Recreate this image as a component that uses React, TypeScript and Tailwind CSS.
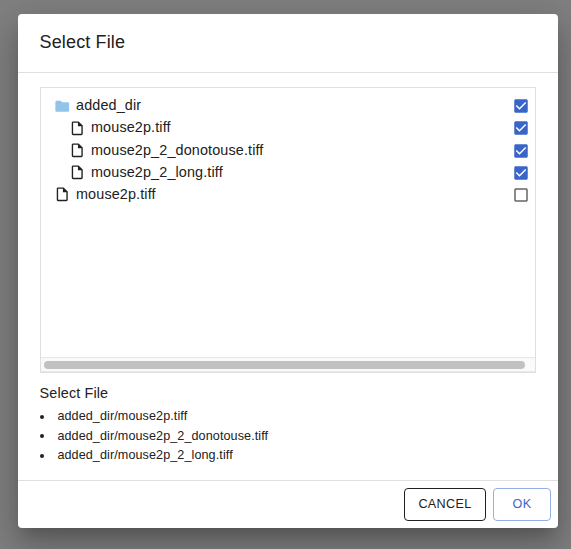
import React from 'react';

type Entry = { name: string; kind: 'dir' | 'file'; nested?: boolean; checked: boolean };

const entries: Entry[] = [
  { name: 'added_dir', kind: 'dir', checked: true },
  { name: 'mouse2p.tiff', kind: 'file', nested: true, checked: true },
  { name: 'mouse2p_2_donotouse.tiff', kind: 'file', nested: true, checked: true },
  { name: 'mouse2p_2_long.tiff', kind: 'file', nested: true, checked: true },
  { name: 'mouse2p.tiff', kind: 'file', checked: false },
];

const selected = [
  'added_dir/mouse2p.tiff',
  'added_dir/mouse2p_2_donotouse.tiff',
  'added_dir/mouse2p_2_long.tiff',
];

function FolderIcon() {
  return (
    <svg className="mb-px size-[16.5px] shrink-0" viewBox="0 0 24 24" fill="#90c5e9">
      <path d="M10 4H4c-1.1 0-2 .9-2 2v12c0 1.1.9 2 2 2h16c1.1 0 2-.9 2-2V8c0-1.1-.9-2-2-2h-8z" />
    </svg>
  );
}

function FileIcon() {
  return (
    <svg className="mb-px size-[16.5px] shrink-0" viewBox="0 0 24 24" fill="#212121">
      <path d="M14 2H6c-1.1 0-2 .9-2 2v16c0 1.1.9 2 2 2h12c1.1 0 2-.9 2-2V8zM6 20V4h7v5h5v11z" />
    </svg>
  );
}

function Checkbox({ checked }: { checked: boolean }) {
  return (
    <svg className="size-[18px] shrink-0" viewBox="0 0 24 24" fill={checked ? '#3a65c8' : '#666666'}>
      {checked ? (
        <path d="M19 3H5c-1.11 0-2 .9-2 2v14c0 1.1.89 2 2 2h14c1.11 0 2-.9 2-2V5c0-1.1-.89-2-2-2zm-9 14l-5-5 1.41-1.41L10 14.17l7.59-7.59L19 8l-9 9z" />
      ) : (
        <path d="M19 5v14H5V5h14m0-2H5c-1.1 0-2 .9-2 2v14c0 1.1.9 2 2 2h14c1.1 0 2-.9 2-2V5c0-1.1-.9-2-2-2z" />
      )}
    </svg>
  );
}

export default function App() {
  return (
    <div className="h-[549px] w-[571px] overflow-hidden bg-[#808080] pt-[14px] pl-[18px] font-['Liberation_Sans',Arial,sans-serif] text-[#212121]">
      <div className="flex h-[514px] w-[540px] flex-col rounded-[4px] bg-white shadow-[0_10px_14px_-6px_rgba(0,0,0,0.2),0_22px_35px_3px_rgba(0,0,0,0.14),0_8px_42px_7px_rgba(0,0,0,0.12)]">
        <h2 className="flex h-[58px] shrink-0 items-center pl-[21.6px] text-[18px] leading-[28px] tracking-[0.13px]">
          <span className="-mt-0.5">Select File</span>
        </h2>
        <div className="flex h-[409px] shrink-0 flex-col border-y border-[#dfdfdf] px-[22px] pt-[14px]">
          <div className="flex h-[286px] shrink-0 flex-col border border-[#dfdfdf]">
            <ul className="grow pt-[7.2px] pr-[5px] pl-[13px]">
              {entries.map((entry, i) => (
                <li key={i} className={`flex h-[22.2px] items-center ${entry.nested ? 'pl-[15px]' : ''}`}>
                  {entry.kind === 'dir' ? <FolderIcon /> : <FileIcon />}
                  <span className="mb-[2px] ml-[5.5px] grow text-[14.4px] leading-[20px] tracking-[0.13px]">{entry.name}</span>
                  <Checkbox checked={entry.checked} />
                </li>
              ))}
            </ul>
            <div className="flex h-[15px] items-center border-t border-b border-t-[#e8e8e8] border-b-[#e8e8e8] bg-[#fafafa] pl-[3px]">
              <div className="h-2 w-[481px] rounded-full bg-[#c1c1c1]" />
            </div>
          </div>
          <p className="mt-[9px] -ml-[0.4px] text-[14.4px] leading-[22px] tracking-[0.13px]">Select File</p>
          <ul className="mt-[3px]">
            {selected.map((path) => (
              <li key={path} className="flex h-[19.5px] items-center text-[12.6px] leading-[19px] tracking-[0.09px]">
                <span className="mr-[13.4px] size-1 rounded-full bg-[#212121]" />
                {path}
              </li>
            ))}
          </ul>
        </div>
        <div className="flex grow items-center justify-end gap-[7px] pr-[7px]">
          <button className="h-[33px] w-[82px] rounded-[4px] border border-[#212121] text-[12.6px] tracking-[0.35px]">CANCEL</button>
          <button className="h-[33px] w-[58px] rounded-[4px] border border-[#96aee6] text-[12.6px] tracking-[0.35px] text-[#3a65c8]">OK</button>
        </div>
      </div>
    </div>
  );
}
